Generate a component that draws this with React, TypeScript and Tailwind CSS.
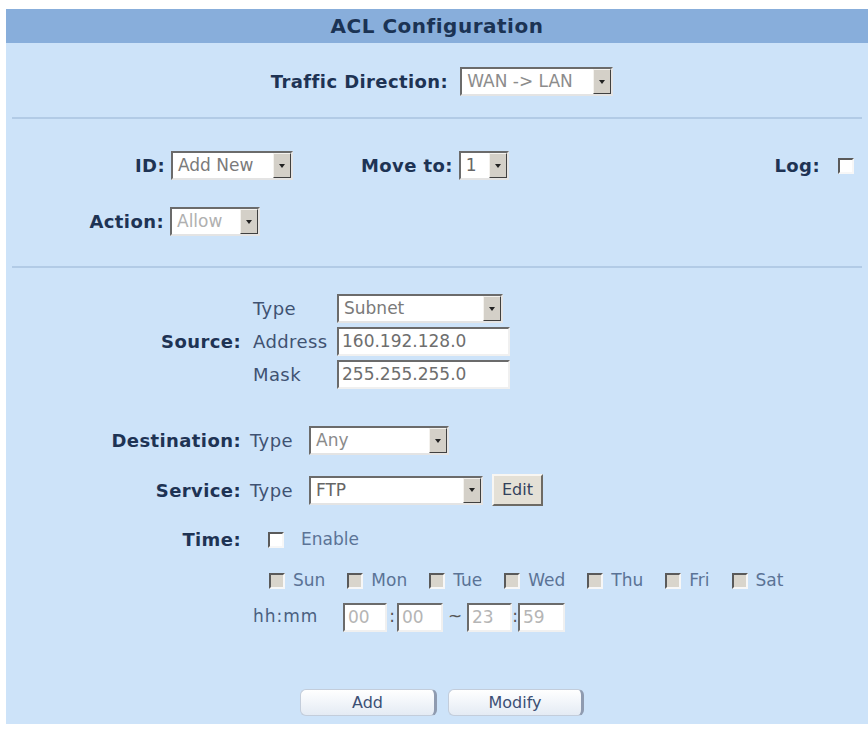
import React from "react";

// ── Form controls (classic router admin look) ───────────────────────────────

type SelectProps = { className: string; value: string; tone?: string };

const Select = ({ className, value, tone = "text-[#7a7a7a]" }: SelectProps) => (
  <div
    className={`flex h-[29px] items-stretch border-2 border-t-[#6b6b6b] border-l-[#6b6b6b] border-b-[#e4e4e4] border-r-[#e4e4e4] bg-white ${className}`}
  >
    <span className={`flex-1 truncate pl-[5px] text-[17px] leading-[25px] ${tone}`}>
      {value}
    </span>
    <span className="flex w-[18px] items-center justify-center border border-t-[#f4f2ee] border-l-[#f4f2ee] border-b-[#404040] border-r-[#404040] bg-[#d4d0c8]">
      <svg width="6" height="4" viewBox="0 0 6 4">
        <path d="M0 0h6L3 4z" fill="#222" />
      </svg>
    </span>
  </div>
);

type BoxProps = { className: string; value: string; tone?: string };

const TextBox = ({ className, value, tone = "text-[#6e6e6e]" }: BoxProps) => (
  <div
    className={`h-[29px] border-2 border-t-[#6b6b6b] border-l-[#6b6b6b] border-b-[#f0f0f0] border-r-[#f0f0f0] bg-white pl-[3px] text-[17px] leading-[25px] ${tone} ${className}`}
  >
    {value}
  </div>
);

const Check = ({ disabled = false }: { disabled?: boolean }) => (
  <span
    className={`inline-block h-[16px] w-[16px] shrink-0 border-2 border-t-[#5a5a5a] border-l-[#5a5a5a] border-b-[#f7f7f7] border-r-[#f7f7f7] ${
      disabled ? "bg-[#d9d5cc]" : "bg-white"
    }`}
  />
);

const Divider = () => <div className="mx-[6px] h-[2px] bg-[#b2cbe6]" />;

const Label = ({ children }: { children: React.ReactNode }) => (
  <span className="text-[18px] font-bold tracking-[0.4px] text-[#1e3354]">{children}</span>
);

const Sub = ({ children }: { children: React.ReactNode }) => (
  <span className="text-[18px] tracking-[0.4px] text-[#3f5272]">{children}</span>
);

const days = ["Sun", "Mon", "Tue", "Wed", "Thu", "Fri", "Sat"];

// ── ACL Configuration panel ─────────────────────────────────────────────────

export default function App() {
  return (
    <div className="min-h-screen bg-white pl-[6px] pt-[9px] font-['DejaVu_Sans',Verdana,sans-serif]">
      <div className="flex h-[715px] flex-col bg-[#cde3f9]">
        {/* Title bar */}
        <div className="flex h-[34px] items-center justify-center bg-[#88aedb] text-[20px] font-bold tracking-[0.5px] text-[#1b3354]">
          ACL Configuration
        </div>

        {/* Traffic direction */}
        <div className="flex h-[74px] items-start justify-center gap-[12px] pl-[10px] pt-[24px]">
          <span className="leading-[29px]">
            <Label>Traffic Direction:</Label>
          </span>
          <Select className="w-[153px]" value="WAN -> LAN" tone="text-[#8c8c8c]" />
        </div>
        <Divider />

        {/* Rule id / action */}
        <div className="flex h-[147px] flex-col pt-[32px]">
          <div className="flex items-center">
            <div className="w-[159px] text-right">
              <Label>ID:</Label>
            </div>
            <Select className="ml-[6px] w-[122px]" value="Add New" />
            <div className="ml-[68px]">
              <Label>Move to:</Label>
            </div>
            <Select className="ml-[6px] w-[50px]" value="1" tone="text-[#666]" />
            <div className="flex flex-1 items-center justify-end gap-[18px] pr-[14px]">
              <Label>Log:</Label>
              <Check />
            </div>
          </div>
          <div className="mt-[27px] flex items-center">
            <div className="w-[158px] text-right">
              <Label>Action:</Label>
            </div>
            <Select className="ml-[6px] w-[90px]" value="Allow" tone="text-[#b0b0b0]" />
          </div>
        </div>
        <Divider />

        {/* Source / destination / service / time */}
        <div className="flex flex-1 flex-col pt-[26px]">
          <div className="flex items-center">
            <div className="w-[235px] text-right">
              <Label>Source:</Label>
            </div>
            <div className="ml-[12px] grid grid-cols-[84px_auto] items-center gap-y-[4px]">
              <Sub>Type</Sub>
              <Select className="w-[166px]" value="Subnet" />
              <Sub>Address</Sub>
              <TextBox className="w-[173px]" value="160.192.128.0" />
              <Sub>Mask</Sub>
              <TextBox className="w-[173px]" value="255.255.255.0" />
            </div>
          </div>

          <div className="mt-[37px] flex items-center">
            <div className="w-[235px] text-right">
              <Label>Destination:</Label>
            </div>
            <div className="ml-[9px] w-[59px]">
              <Sub>Type</Sub>
            </div>
            <Select className="w-[140px]" value="Any" tone="text-[#8a8a8a]" />
          </div>

          <div className="mt-[19px] flex items-center">
            <div className="w-[235px] text-right">
              <Label>Service:</Label>
            </div>
            <div className="ml-[9px] w-[59px]">
              <Sub>Type</Sub>
            </div>
            <Select className="w-[174px]" value="FTP" tone="text-[#666]" />
            <button className="ml-[9px] h-[32px] w-[51px] border-2 border-t-[#f8f6f2] border-l-[#f8f6f2] border-b-[#6d6a64] border-r-[#6d6a64] bg-[#e4e0d6] text-[16px] text-[#33415c]">
              Edit
            </button>
          </div>

          <div className="mt-[20px] flex items-center">
            <div className="w-[235px] text-right">
              <Label>Time:</Label>
            </div>
            <div className="ml-[27px] flex items-center gap-[17px]">
              <Check />
              <span className="text-[17px] text-[#5b7396]">Enable</span>
            </div>
          </div>

          <div className="ml-[263px] mt-[15px] flex items-center gap-[22px]">
            {days.map((d) => (
              <div key={d} className="flex items-center gap-[8px]">
                <Check disabled />
                <span className="text-[17px] text-[#5b7396]">{d}</span>
              </div>
            ))}
          </div>

          <div className="ml-[247px] mt-[9px] flex items-center text-[17px] text-[#4a5f80]">
            <span className="w-[90px] tracking-[1px]">hh:mm</span>
            <TextBox className="w-[44px]" value="00" tone="text-[#b5b5b5]" />
            <span className="w-[10px] text-center text-[#555]">:</span>
            <TextBox className="w-[46px]" value="00" tone="text-[#b5b5b5]" />
            <span className="w-[24px] text-center text-[#555]">~</span>
            <TextBox className="w-[45px]" value="23" tone="text-[#b5b5b5]" />
            <span className="w-[6px] text-center text-[#555]">:</span>
            <TextBox className="w-[47px]" value="59" tone="text-[#b5b5b5]" />
          </div>

          {/* Submit buttons */}
          <div className="mt-auto mb-[8px] flex justify-center gap-[11px] pl-[10px]">
            <button className="h-[27px] w-[137px] rounded-[6px] border border-[#c3cddb] border-r-[3px] border-r-[#8f9bb0] bg-gradient-to-b from-white to-[#e4ebf4] text-[16px] text-[#3c4f74]">
              Add
            </button>
            <button className="h-[27px] w-[136px] rounded-[6px] border border-[#c3cddb] border-r-[3px] border-r-[#8f9bb0] bg-gradient-to-b from-white to-[#e4ebf4] text-[16px] text-[#3c4f74]">
              Modify
            </button>
          </div>
        </div>
      </div>
    </div>
  );
}
